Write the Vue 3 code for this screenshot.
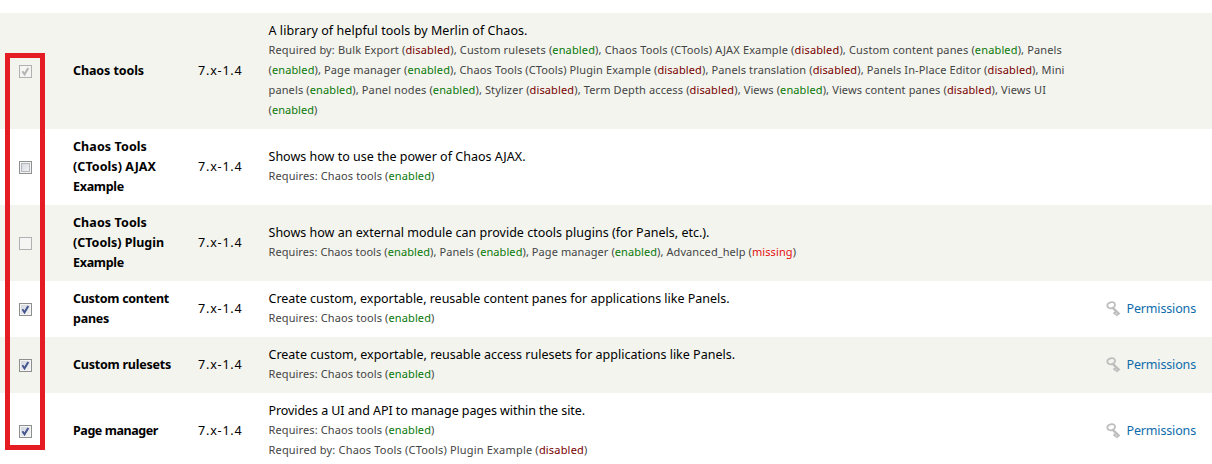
<script setup>
const E = 'enabled'
const D = 'disabled'
const M = 'missing'

const rows = [
  {
    state: 'checked', locked: true,
    name: [['Chaos tools', 71]],
    desc: ['A library of helpful tools by Merlin of Chaos.', 259],
    deps: [
      [[['Required by: Bulk Export ('], [D], ['), Custom rulesets ('], [E], ['), Chaos Tools (CTools) AJAX Example ('], [D], ['), Custom content panes ('], [E], ['), Panels']], 793.5],
      [[['('], [E], ['), Page manager ('], [E], ['), Chaos Tools (CTools) Plugin Example ('], [D], ['), Panels translation ('], [D], ['), Panels In-Place Editor ('], [D], ['), Mini']], 796],
      [[['panels ('], [E], ['), Panel nodes ('], [E], ['), Stylizer ('], [D], ['), Term Depth access ('], [D], ['), Views ('], [E], ['), Views content panes ('], [D], ['), Views UI']], 777.5],
      [[['('], [E], [')']], 49]
    ]
  },
  {
    state: 'hover',
    name: [['Chaos Tools', 74], ['(CTools) AJAX', 83], ['Example', 51]],
    desc: ['Shows how to use the power of Chaos AJAX.', 257],
    deps: [[[['Requires: Chaos tools ('], [E], [')']], 166]]
  },
  {
    state: 'empty', locked: true,
    name: [['Chaos Tools', 74], ['(CTools) Plugin', 91], ['Example', 51]],
    desc: ['Shows how an external module can provide ctools plugins (for Panels, etc.).', 441],
    deps: [[[['Requires: Chaos tools ('], [E], ['), Panels ('], [E], ['), Page manager ('], [E], ['), Advanced_help ('], [M], [')']], 527.5]]
  },
  {
    state: 'checked', permissions: true,
    name: [['Custom content', 96], ['panes', 36]],
    desc: ['Create custom, exportable, reusable content panes for applications like Panels.', 461],
    deps: [[[['Requires: Chaos tools ('], [E], [')']], 166]]
  },
  {
    state: 'checked', permissions: true,
    name: [['Custom rulesets', 98]],
    desc: ['Create custom, exportable, reusable access rulesets for applications like Panels.', 466.5],
    deps: [[[['Requires: Chaos tools ('], [E], [')']], 166]]
  },
  {
    state: 'checked', permissions: true,
    name: [['Page manager', 85]],
    desc: ['Provides a UI and API to manage pages within the site.', 316.5],
    deps: [
      [[['Requires: Chaos tools ('], [E], [')']], 166],
      [[['Required by: Chaos Tools (CTools) Plugin Example ('], [D], [')']], 319]
    ]
  }
]

const vMeasure = {
  mounted(el, { value }) {
    const natural = el.getBoundingClientRect().width
    el.style.letterSpacing = `${(value - natural) / el.textContent.length}px`
  }
}
</script>

<template>
  <main class="modules">
    <div v-for="(row, i) in rows" :key="i" class="row" :class="{ odd: i % 2 === 0 }">
      <div class="check">
        <span class="box" :class="[row.state, { locked: row.locked }]">
          <svg v-if="row.state === 'checked'" viewBox="0 0 13 13" width="13" height="13">
            <path d="M3.4 6.3 L5.5 9.3 L9.3 2.9" />
          </svg>
        </span>
      </div>
      <div class="name">
        <div v-for="line in row.name" :key="line[0]"><span v-measure="line[1]">{{ line[0] }}</span></div>
      </div>
      <div class="version"><span v-measure="44.5">7.x-1.4</span></div>
      <div class="about">
        <div class="desc"><span v-measure="row.desc[1]">{{ row.desc[0] }}</span></div>
        <div v-for="(line, n) in row.deps" :key="n" class="dep">
          <span v-measure="line[1]"><span v-for="(part, p) in line[0]" :key="p" :class="part[0]">{{ part[0] }}</span></span>
        </div>
      </div>
      <div class="links">
        <a v-if="row.permissions">
          <svg class="key" viewBox="0 0 16 16" width="16" height="16">
            <ellipse cx="5.2" cy="4.2" rx="3.9" ry="3" transform="rotate(-15 5.2 4.2)" />
            <path class="shaft" d="M6.6 6.6 L13.4 13.4" />
            <path d="M9.8 10.6 L7.4 12.6 M12 12.4 L10.4 15 M8.2 12 L9.8 13.6" />
          </svg>
          <span v-measure="69.5">Permissions</span>
        </a>
      </div>
    </div>
    <div class="highlight"></div>
  </main>
</template>

<style>
body {
  background: #fff;
  overflow: hidden;
}
</style>

<style scoped>
.modules {
  position: relative;
  box-sizing: border-box;
  height: 464px;
  padding-top: 13px;
  overflow: hidden;
  font: 12.5px/20px "Noto Sans", "Open Sans", sans-serif;
  color: #000;
  white-space: pre;
}
.row {
  display: grid;
  grid-template-columns: 73px 125px 70.5px 1fr 106px;
  align-items: center;
  padding: 8px 0;
}
.row.odd { background: #f3f4ee; }
.check {
  display: flex;
  padding-left: 19px;
}
.box {
  box-sizing: border-box;
  width: 13px;
  height: 13px;
  border: 1px solid #8e8f8f;
  background: linear-gradient(135deg, #cfd4dc, #f7f7f7);
  box-shadow: inset 0 0 0 1px #f4f4f4;
}
.box svg {
  display: block;
  margin: -1px;
}
.box path {
  fill: none;
  stroke: #46568f;
  stroke-width: 2;
}
.box.hover { box-shadow: inset 0 0 0 1px #f4f4f4, inset 0 0 0 2px #b5b9be; }
.box.locked {
  border-color: #b1b1b1;
  background: #f5f5f3;
}
.box.locked path { stroke: #b4b4b4; }
.name { font-weight: 700; }
.dep {
  font-size: 11px;
  color: #444;
  position: relative;
  top: -1px;
}
.enabled { color: #087808; }
.disabled { color: #780000; }
.missing { color: #e60f0f; }
.links a {
  display: flex;
  align-items: center;
  gap: 4.5px;
  color: #0d6bab;
}
.key {
  fill: none;
  stroke: #bebebe;
  stroke-width: 1.8;
}
.key .shaft { stroke-width: 2.4; }
.highlight {
  position: absolute;
  box-sizing: border-box;
  left: 5px;
  top: 53px;
  width: 40px;
  height: 397px;
  border: 5px solid #e51c24;
}
</style>
